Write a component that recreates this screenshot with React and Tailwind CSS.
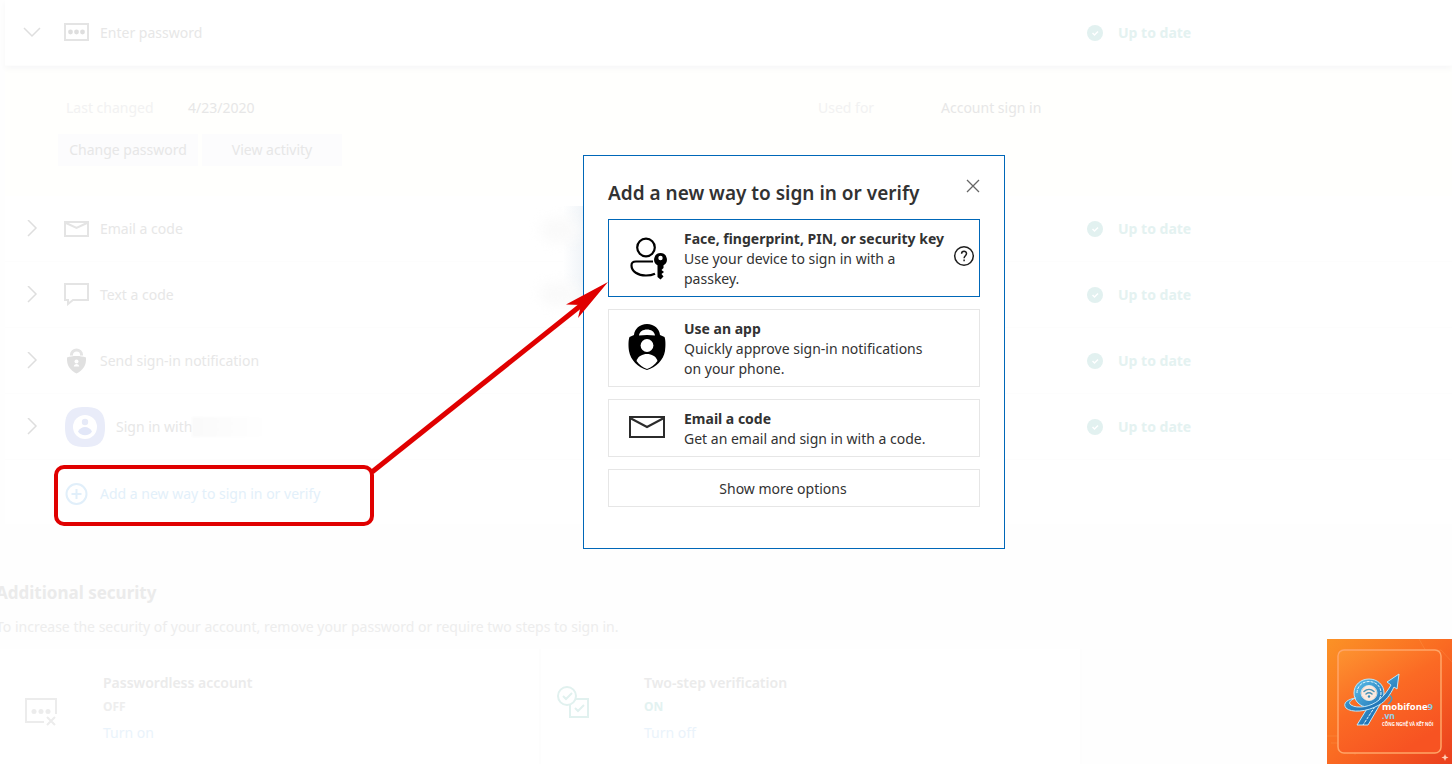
import React from "react";

const MailGlyph = () => (
  <svg width="25" height="16" viewBox="0 0 25 16" fill="none" stroke="#e4e4e4" strokeWidth="2">
    <path d="M1 1h23v14H1z" />
    <path d="M2 2l10.500 5L23 2" />
  </svg>
);

const PasswordGlyph = () => (
  <svg width="25" height="20" viewBox="0 0 25 20">
    <path d="M1 1h23v16H1z" fill="none" stroke="#e4e4e4" strokeWidth="2" />
    <g fill="#dedede">
      <circle cx="6.500" cy="9" r="2.400" />
      <circle cx="12.500" cy="9" r="2.400" />
      <circle cx="18.500" cy="9" r="2.400" />
    </g>
  </svg>
);

const ChatGlyph = () => (
  <svg width="25" height="23" viewBox="0 0 25 23" fill="none" stroke="#e4e4e4" strokeWidth="2">
    <path d="M1 1h23v16H9l-5 4v-4H1z" />
  </svg>
);

const LockGlyph = () => (
  <svg width="25" height="26" viewBox="0 0 25 26">
    <path d="M7.500 7.500V6.500a5 4.500 0 0 1 10 0v1" fill="none" stroke="#e4e4e4" strokeWidth="3" />
    <path d="M3 9.500c3-1 6-1.500 9.500-1.500s6.500.5 9.500 1.500c.5 8-3 12.500-9.500 16C6 22 2.500 17.500 3 9.500z" fill="#e0e0e0" />
    <circle cx="12.500" cy="13.500" r="2" fill="#fff" />
    <path d="M9.800 18.500c0-3.500 5.400-3.500 5.400 0z" fill="#fff" />
  </svg>
);

const AccountGlyph = () => (
  <svg width="40" height="40" viewBox="0 0 40 40">
    <path d="M20 0c14 0 20 5 20 20s-6 20-20 20S0 35 0 20 6 0 20 0z" fill="#e9ecf9" />
    <circle cx="20" cy="20" r="12" fill="#fff" />
    <circle cx="20" cy="15" r="3.200" fill="#e6eaf8" />
    <path d="M13 24.500c3-6 11-6 14 0-3 5-11 5-14 0z" fill="#e2e7f8" />
  </svg>
);

const PlusGlyph = () => (
  <svg width="25" height="22" viewBox="0 0 25 22" fill="none" stroke="#e1effa" strokeWidth="2">
    <circle cx="12.500" cy="11" r="10" />
    <path d="M12.500 6v10M7.500 11h10" />
  </svg>
);

const Chevron = ({ open }) => (
  <svg width="18" height="18" viewBox="0 0 18 18" fill="none" stroke="#dedede" strokeWidth="1.500">
    <path d={open ? "M1 4l8 8 8-8" : "M5 0l8 8-8 8"} />
  </svg>
);

function Status() {
  return (
    <div className="flex w-[365px] shrink-0 items-center gap-[15px] font-bold text-[#e4f2f1]">
      <svg width="16" height="16" viewBox="0 0 16 16">
        <circle cx="8" cy="8" r="8" fill="#e2f1f0" />
        <path d="M5.500 8l2 2 3.500-3.500" fill="none" stroke="#fff" strokeWidth="1.500" />
      </svg>
      Up to date
    </div>
  );
}

function MethodRow({ icon, label, open, wide, blurred }) {
  return (
    <div className="flex h-[66px] items-center border-b border-[#fdfdfd] bg-white">
      <button type="button" className="flex flex-1 items-center pl-[18px] text-left">
        <Chevron open={open} />
        <span className={wide ? "ml-6 mr-[11px]" : "ml-[23px] mr-[11px]"}>{icon}</span>
        {label}
        {blurred && <span className="h-5 w-[74px] bg-gradient-to-r from-[#fafafa] to-white blur-[1px]" />}
      </button>
      <Status />
    </div>
  );
}

function SecurityCard({ icon, title, state, on, action }) {
  return (
    <section className="flex w-[541px] border-r-2 border-[#fdfdfd] bg-white pt-6">
      {icon}
      <div>
        <h3 className="leading-5 font-semibold">{title}</h3>
        <p className={on ? "mt-1 text-xs leading-5 font-bold text-[#e3f2f1]" : "mt-1 text-xs leading-5 font-bold text-[#eeeeee]"}>
          {state}
        </p>
        <a href="#security" className="mt-1 block leading-6 text-[#eaf3fb]">{action}</a>
      </div>
    </section>
  );
}

const PasskeyIcon = () => (
  <svg width="40" height="46" viewBox="-2 0 40 46" fill="none" stroke="#000" strokeWidth="2.200">
    <circle cx="17" cy="11.500" r="8.800" />
    <path d="M24 25.500H7c-3.500 0-4.500 1.500-4.500 4 0 6 6.500 10 14.500 10 3.500 0 6.500-.6 9-1.800" />
    <path fill="#000" stroke="none" fillRule="evenodd" d="M31.500 17a6.500 6.500 0 0 1 3 12.200v2.800l-2 2 2.500 2-2.500 2 2 2.500-3 3-3-2.500V29.200A6.500 6.500 0 0 1 31.500 17zm0 2.800a2.200 2.200 0 1 0 0 4.400 2.200 2.200 0 0 0 0-4.400z" />
  </svg>
);

const AppIcon = () => (
  <svg width="38" height="50" viewBox="0 1 38 50">
    <path d="M19 1c7.500 0 12.500 5 13 11l4.500 2c1.200 3 1.200 9 .5 14-1.500 9-9 16.500-18 19C10 44.500 2.500 37 1 28c-.7-5-.7-11 .5-14L6 12C6.500 6 11.500 1 19 1z" />
    <path fill="#fff" d="M11 12.500c.5-4 4-6 8-6s7.500 2 8 6c-5-.8-11-.8-16 0z" />
    <circle cx="19" cy="22.500" r="6.400" fill="#fff" />
    <path fill="#fff" d="M8.500 38c1.500-5 6-7 10.500-7s9 2 10.500 7c-3 4-6.500 6.500-10.500 8-4-1.500-7.500-4-10.500-8z" />
  </svg>
);

const EnvelopeIcon = () => (
  <svg width="36" height="26" viewBox="0 0 36 26" fill="none" stroke="#2b2b2b" strokeWidth="2">
    <path d="M1 1h34v20H1z" />
    <path d="M2 2.500l16 8.500 16-8.500" />
  </svg>
);

function Option({ icon, title, text, selected, help }) {
  return (
    <div className={selected ? "flex items-center border border-[#0067b8] pr-1" : "flex items-center border border-[#e6e6e6] pr-1"}>
      <button type="button" className="flex flex-1 items-center pt-[9px] pb-[7px] text-left">
        <span className="flex w-[75px] shrink-0 justify-center">{icon}</span>
        <span className="block">
          <strong className="block leading-5 font-bold whitespace-nowrap">{title}</strong>
          <span className="block max-w-[250px] leading-5">{text}</span>
        </span>
      </button>
      {help && (
        <button type="button" aria-label="Help" className="flex shrink-0 pb-1">
          <svg width="22" height="22" viewBox="0 0 22 22" fill="none" stroke="#1f1f1f" strokeWidth="1.500">
            <circle cx="11" cy="11" r="9.300" />
            <path d="M8.600 8.800c0-3.400 4.900-3.300 4.900-.2 0 2-2.400 2.200-2.400 4.600" />
            <path d="M11.100 14.500v1.800" />
          </svg>
        </button>
      )}
    </div>
  );
}

function Brand() {
  return (
    <svg className="absolute right-0 bottom-0" width="125" height="125" viewBox="0 0 125 125" role="img" aria-label="mobifone9.vn">
      <defs>
        <linearGradient id="bg" x1="0" y1="0" x2="1" y2="1">
          <stop offset="0" stopColor="#fb9226" />
          <stop offset=".5" stopColor="#fa6a22" />
          <stop offset="1" stopColor="#ea3f1e" />
        </linearGradient>
        <linearGradient id="tile" x1="0" y1="0" x2=".6" y2="1">
          <stop offset="0" stopColor="#fd9430" />
          <stop offset=".5" stopColor="#fb6a24" />
          <stop offset="1" stopColor="#f75322" />
        </linearGradient>
        <linearGradient id="blue" x1="0" y1="0" x2=".7" y2="1">
          <stop offset="0" stopColor="#5cc0ea" />
          <stop offset="1" stopColor="#1768ae" />
        </linearGradient>
      </defs>
      <path d="M0 0h125v125H0z" fill="url(#bg)" />
      <g fill="none" stroke="#ffb56a" strokeWidth=".7" opacity=".3">
        <path d="M92 0l8 14 14-3 11 12M100 14l-6 12M0 97h26l8 6M4 104h30M12 92v20M28 88v28" />
      </g>
      <rect x="11" y="11" width="103" height="103" rx="6" fill="url(#tile)" stroke="#ffa568" strokeWidth="1.500" />
      <path d="M61 56c5 1 5 5 0 9" fill="none" stroke="#4a9cc4" strokeWidth="1.500" />
      <path
        fillRule="evenodd"
        fill="url(#blue)"
        stroke="#bfe8fa"
        strokeWidth="1"
        d="M42 40c8.500 0 15 6 15 14 0 5-2.500 9-5.500 14L41 86H30l11-18c-8 0-14-6-14-14 0-8 6.500-14 15-14zm0 6.500a8 7.500 0 1 0 0 15 8 7.500 0 0 0 0-15z"
      />
      <path d="M30 54c0-7 5.500-11.500 12-11.500S54 47 54 54c0 4-2 7-5 12L36 86" fill="none" stroke="#e3f6ff" strokeWidth="1" strokeDasharray="3 1" />
      <path
        fill="url(#blue)"
        stroke="#bfe8fa"
        strokeWidth="1"
        d="M29 59c-6 2-8 5-5 7 6 4 20 2 28-5 5-4 9-10 12-15l-4-3 12-8-2 15-3-2c-4 8-8 14-15 18-12 7-28 8-33 3-4-5 2-9 10-10z"
      />
      <circle cx="42" cy="54" r="7.500" fill="#fbe9df" />
      <g fill="none" stroke="#4a93b5" strokeWidth="1.500" strokeLinecap="round">
        <path d="M37 52.500c3-2.800 7-2.800 10 0M39 55c2-1.700 4-1.700 6 0" />
      </g>
      <circle cx="42" cy="57.500" r="1.200" fill="#3888af" />
      <g fontFamily="'Open Sans', sans-serif" fontWeight="700">
        <text x="55" y="71" fontSize="9.500" fill="#fff">mobifone<tspan fill="#8fcbe4">9</tspan></text>
        <text x="55" y="80" fontSize="8.500" fill="#93d4ed">.vn</text>
        <text x="55" y="87" fontSize="4.300" fill="#fff">CÔNG NGHỆ VÀ KẾT NỐI</text>
      </g>
      <path d="M118 115l1 2.500 2.500 1-2.500 1-1 2.500-1-2.500-2.500-1 2.500-1z" fill="#ffd0b8" />
    </svg>
  );
}

export default function App() {
  return (
    <div className="relative flex min-h-screen flex-col overflow-hidden bg-[#fefefe] font-['Noto_Sans','Open_Sans',sans-serif] text-sm text-[#e7e7e7]">
      <main className="flex flex-1 flex-col">
        <div className="ml-[5px] bg-white">
          <div className="relative shadow-[0_3px_6px_#f7f7f8]">
            <MethodRow icon={<PasswordGlyph />} label="Enter password" open />
          </div>
          <div className="bg-[#fffffd] pt-8 pb-[30px]">
            <dl className="flex leading-5">
              <div className="flex flex-1 pl-[61px]">
                <dt className="w-[122px] text-[#f2f2f2]">Last changed</dt>
                <dd>4/23/2020</dd>
              </div>
              <div className="flex w-[634px]">
                <dt className="w-[123px] text-[#f2f2f2]">Used for</dt>
                <dd>Account sign in</dd>
              </div>
            </dl>
            <div className="mt-4 flex gap-1 pl-[53px]">
              <button type="button" className="h-8 w-[140px] bg-[#fcfcfd]">Change password</button>
              <button type="button" className="h-8 w-[140px] bg-[#fcfcfd]">View activity</button>
            </div>
          </div>
          <MethodRow icon={<MailGlyph />} label="Email a code" />
          <MethodRow icon={<ChatGlyph />} label="Text a code" />
          <MethodRow icon={<LockGlyph />} label="Send sign-in notification" />
          <MethodRow icon={<AccountGlyph />} label="Sign in with" wide blurred />
          <div className="flex h-16 items-center pt-1 pl-[59px]">
            <button type="button" className="flex items-center gap-[11px] text-[#e3f0fa]">
              <PlusGlyph />
              Add a new way to sign in or verify
            </button>
          </div>
        </div>

        <h2 className="-ml-1 mt-[57px] text-[17px] leading-6 font-bold text-[#ebebeb]">Additional security</h2>
        <p className="-ml-1 mt-3 leading-5 text-[#ededed]">
          To increase the security of your account, remove your password or require two steps to sign in.
        </p>
        <div className="mt-3 flex flex-1 text-[#ebebeb]">
          <SecurityCard
            title="Passwordless account"
            state="OFF"
            action="Turn on"
            icon={
              <svg className="mt-[25px] mr-[45px] ml-[25px]" width="33" height="28" viewBox="0 0 33 28" fill="none" stroke="#ececec" strokeWidth="2">
                <path d="M19 24H1V1h30v15M22 19l8 8M30 19l-8 8" />
                <g fill="#ececec" stroke="none">
                  <circle cx="9" cy="13.500" r="2.500" />
                  <circle cx="16" cy="13.500" r="2.500" />
                  <circle cx="23" cy="13.500" r="2.500" />
                </g>
              </svg>
            }
          />
          <SecurityCard
            title="Two-step verification"
            state="ON"
            on
            action="Turn off"
            icon={
              <svg className="mt-[13px] mr-[54px] ml-4" width="33" height="33" viewBox="0 0 33 33" fill="none" stroke="#e1f1ef" strokeWidth="2">
                <circle cx="10" cy="10" r="9" />
                <path d="M18.500 13H31v18H13V19M6 10l3 3 6-6M18 22l3 3 6-6" />
              </svg>
            }
          />
        </div>
      </main>

      <div className="absolute top-[206px] left-[563px] h-[100px] w-5 bg-gradient-to-r from-white to-[#f0f4f8]" />
      <div className="absolute top-[218px] left-[540px] h-6 w-10 rounded-full bg-[#fafafa] blur-[6px]" />
      <div className="absolute top-[282px] left-[540px] h-6 w-10 rounded-full bg-[#fafafa] blur-[6px]" />

      <div
        role="dialog"
        aria-labelledby="dialog-title"
        className="absolute top-[155px] left-[583px] w-[422px] border border-[#0067b8] bg-white px-6 pt-[23px] pb-[41px] text-[#323232]"
      >
        <div className="flex items-start justify-between">
          <h1 id="dialog-title" className="text-[19px] leading-7 font-semibold">Add a new way to sign in or verify</h1>
          <button type="button" aria-label="Close" className="flex">
            <svg width="14" height="14" viewBox="0 0 14 14" fill="none" stroke="#666" strokeWidth="1.300">
              <path d="M1 1l12 12M13 1L1 13" />
            </svg>
          </button>
        </div>
        <div className="mt-3 flex flex-col gap-3">
          <Option icon={<PasskeyIcon />} title="Face, fingerprint, PIN, or security key" text="Use your device to sign in with a passkey." selected help />
          <Option icon={<AppIcon />} title="Use an app" text="Quickly approve sign-in notifications on your phone." />
          <Option icon={<EnvelopeIcon />} title="Email a code" text="Get an email and sign in with a code." />
          <button type="button" className="border border-[#e6e6e6] pt-[9px] pr-[22px] pb-[7px] leading-5">Show more options</button>
        </div>
      </div>

      <div className="absolute top-[465px] left-[54px] h-[61px] w-80 rounded-[10px] border-4 border-[#e00000]" />
      <svg className="absolute top-[280px] left-[368px]" width="242" height="196" viewBox="0 0 242 196">
        <path d="M4 192L216 23" stroke="#e00000" strokeWidth="5" />
        <path d="M240 2L198 24.500l15 .5-3 13z" fill="#e00000" />
      </svg>
      <Brand />
    </div>
  );
}
